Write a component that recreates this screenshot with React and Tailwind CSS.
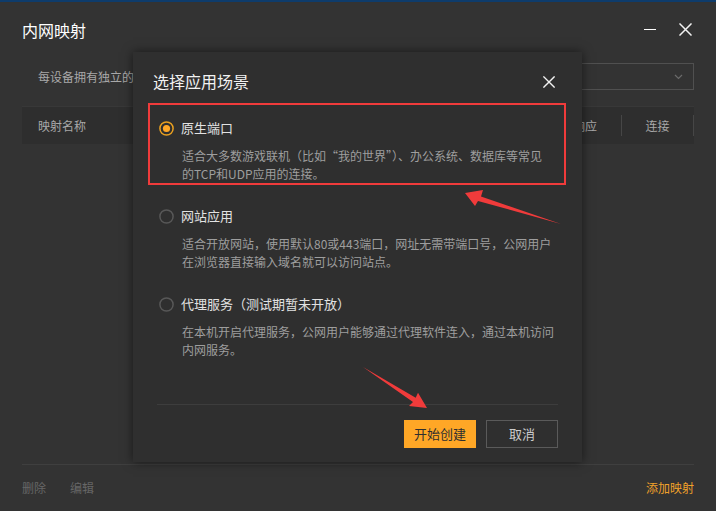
import React from 'react';

const options = [
  {
    label: '原生端口',
    lines: ['适合大多数游戏联机（比如“我的世界”）、办公系统、数据库等常见', '的TCP和UDP应用的连接。'],
    checked: true
  },
  {
    label: '网站应用',
    lines: ['适合开放网站，使用默认80或443端口，网址无需带端口号，公网用户', '在浏览器直接输入域名就可以访问站点。'],
    checked: false
  },
  {
    label: '代理服务（测试期暂未开放）',
    lines: ['在本机开启代理服务，公网用户能够通过代理软件连入，通过本机访问', '内网服务。'],
    checked: false
  }
];

const Radio = ({ checked }) => (
  <svg width="15" height="15" viewBox="0 0 15 15" className="shrink-0">
    <circle cx="7.5" cy="7.5" r="6.6" fill="none" stroke={checked ? '#e9a020' : '#585858'} strokeWidth="1.5" />
    {checked && <circle cx="7.5" cy="7.5" r="3.6" fill="#ffa726" />}
  </svg>
);

const CloseIcon = ({ size = 13 }) => (
  <svg width={size} height={size} viewBox="0 0 13 13">
    <path d="M1 1L12 12M12 1L1 12" stroke="#f2f2f2" strokeWidth="1.5" strokeLinecap="square" />
  </svg>
);

const App = () => {
  return (
    <div className="relative w-[716px] h-[511px] overflow-hidden bg-[#333333] font-['Noto_Sans_CJK_SC',sans-serif] flex flex-col">
      <div className="h-[2px] bg-[#0e3c6c]" />

      {/* Window header */}
      <div className="h-[55px] flex items-center justify-between pl-[22px] pr-[24px]">
        <span className="text-[16px] leading-[20px] text-white">内网映射</span>
        <div className="flex items-center gap-[23px]">
          <div className="w-[12px] h-[1.5px] bg-white" />
          <CloseIcon />
        </div>
      </div>

      {/* Mode select */}
      <div className="mt-[6px] h-[27px] mx-[22px] flex items-center">
        <span className="pl-[16px] text-[12px] text-[#a8a8a8] whitespace-nowrap">每设备拥有独立的</span>
        <div className="ml-auto w-[390px] h-full border border-[#505050] flex items-center justify-end pr-[10px]">
          <svg width="9" height="6" viewBox="0 0 9 6">
            <path d="M1 1L4.5 4.5L8 1" fill="none" stroke="#6a6a6a" strokeWidth="1.2" />
          </svg>
        </div>
      </div>

      {/* Table header */}
      <div className="mt-[16px] mx-[22px] h-[38px] bg-[#2e2e2e] border-t border-[#383838] flex items-center text-[12px] text-[#a8a8a8]">
        <span className="pl-[16px]">映射名称</span>
        <div className="ml-auto flex items-center">
          <span className="w-[72px] text-center">响应</span>
          <div className="w-px h-[21px] bg-[#464646]" />
          <span className="w-[71px] text-center">连接</span>
          <div className="w-px h-[21px] bg-[#464646]" />
        </div>
      </div>

      <div className="flex-1" />

      {/* Footer */}
      <div className="mx-[22px] h-px bg-[#3f3f3f]" />
      <div className="h-[46px] mx-[22px] flex items-center text-[12px]">
        <span className="text-[#666666]">删除</span>
        <span className="ml-[24px] text-[#666666]">编辑</span>
        <span className="ml-auto text-[#f0a12a]">添加映射</span>
      </div>

      {/* Dialog */}
      <div className="absolute left-[133px] top-[52px] w-[449px] bg-[#2f2f2f] shadow-[0_0_10px_rgba(0,0,0,0.55)] flex flex-col">
        <div className="h-[51px] flex items-start justify-between pl-[20px] pr-[27px] pt-[19px]">
          <span className="text-[16px] leading-[20px] text-[#f2f2f2]">选择应用场景</span>
          <div className="pt-[5px]">
            <CloseIcon size={12} />
          </div>
        </div>

        <div className="flex flex-col gap-[6px]">
          {options.map((opt) => (
            <div
              key={opt.label}
              className={`ml-[15px] w-[418px] h-[82px] border-2 ${opt.checked ? 'border-[#f03b3b]' : 'border-transparent'}`}
            >
              <div className="pt-[13px] pl-[9px] h-[33px] flex items-center gap-[7px]">
                <Radio checked={opt.checked} />
                <span className="text-[13px] leading-[20px] text-[#e2e2e2] whitespace-nowrap">{opt.label}</span>
              </div>
              <div className="mt-[9px] pl-[32px] text-[12px] leading-[18px] text-[#9e9e9e] whitespace-nowrap">
                {opt.lines.map((line) => (
                  <div key={line}>{line}</div>
                ))}
              </div>
            </div>
          ))}
        </div>

        <div className="mt-[43px] mx-[24px] h-px bg-[#3d3d3d]" />
        <div className="mt-[15px] mb-[14px] pr-[24px] flex justify-end gap-[10px] text-[13px]">
          <button className="w-[72px] h-[28px] bg-[#ffa726] text-[#2f2f2f]">开始创建</button>
          <button className="w-[72px] h-[28px] border border-[#5a5a5a] text-[#cccccc]">取消</button>
        </div>
      </div>

      {/* Annotation arrows */}
      <svg className="absolute inset-0 pointer-events-none" width="716" height="511" viewBox="0 0 716 511">
        <polygon points="465,193 483,190 481,196.5 561,224 478,201 475,206" fill="#f03b3b" />
        <polygon points="427,408 409,406 413,402 363,367 415.7,397.8 418,392.7" fill="#f03b3b" />
      </svg>
    </div>
  );
};

export default App;
